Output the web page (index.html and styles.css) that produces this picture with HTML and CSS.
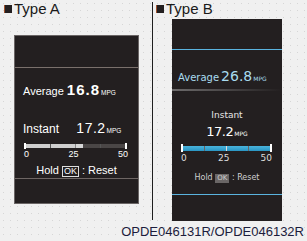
FILE: index.html
```html
<!DOCTYPE html>
<html lang="en">
<head>
    <meta charset="UTF-8">
    <title>Trip Computer - Fuel Economy</title>
    <link rel="stylesheet" href="styles.css">
</head>
<body>
    <div class="figure">
        <div class="col col-a">
            <div class="type-title"><span class="sq"></span>Type A</div>
            <div class="panel-a">
                <div class="top-a"></div>
                <div class="avg-a">Average <b>16.8</b><span class="unit">MPG</span></div>
                <div class="inst-a">Instant <span class="num">17.2</span><span class="unit">MPG</span></div>
                <div class="bar bar-a">
                    <span class="seg on"></span><span class="seg on"></span><span class="seg half"></span><span class="seg"></span>
                </div>
                <div class="scale scale-a"><span>0</span><span>25</span><span>50</span></div>
                <div class="hold-a">Hold <span class="ok">OK</span> : Reset</div>
                <div class="line-a"></div>
            </div>
        </div>
        <div class="divider"></div>
        <div class="col col-b">
            <div class="type-title"><span class="sq"></span>Type B</div>
            <div class="panel-b">
                <div class="top-b"></div>
                <div class="avg-b">Average<span class="num">26.8</span><span class="unit">MPG</span></div>
                <div class="glow"></div>
                <div class="inst-b">Instant</div>
                <div class="inst-b-num">17.2<span class="unit">MPG</span></div>
                <div class="bar bar-b">
                    <span class="seg"></span><span class="seg"></span><span class="seg mid"></span><span class="seg"></span>
                </div>
                <div class="scale scale-b"><span>0</span><span>25</span><span>50</span></div>
                <div class="hold-b">Hold <span class="ok">OK</span> : Reset</div>
                <div class="line-b"></div>
            </div>
        </div>
    </div>
    <div class="caption">OPDE046131R/OPDE046132R</div>
</body>
</html>
```

FILE: styles.css
```css
body {
    margin: 0;
    width: 307px;
    height: 241px;
    overflow: hidden;
    font-family: "Liberation Sans", Arial, sans-serif;
    background-color: #f0f0f0;
    background-image: radial-gradient(#d6d6d6 0.7px, transparent 1px);
    background-size: 7px 7px;
}
.figure {
    display: grid;
    grid-template-columns: 152px 1px 154px;
    height: 221px;
}
.divider {
    margin-top: 2px;
    height: 218px;
    background-color: #1e1e1e;
}
.type-title {
    display: flex;
    align-items: center;
    margin-top: 2px;
    font-size: 15px;
    line-height: 14px;
    color: #1a1a1a;
}
.sq {
    width: 8px;
    height: 8px;
    margin-right: 2px;
    background-color: #231f20;
    border-left: 1px solid #a0522d;
    box-sizing: border-box;
}
.col-a .type-title { padding-left: 4px; }
.col-b .type-title { padding-left: 3px; }

/* Type A */
.panel-a {
    box-sizing: border-box;
    width: 125px;
    height: 169px;
    margin: 19px 0 0 14px;
    background-color: #231f20;
    border: 1px solid #6a6565;
    color: #fff;
}
.top-a {
    height: 31px;
    border-bottom: 1px solid #7a706c;
}
.avg-a {
    margin-top: 13px;
    padding-left: 8px;
    font-size: 11px;
    line-height: 18px;
}
.avg-a b {
    font-size: 15px;
    letter-spacing: 1px;
}
.unit {
    font-size: 6.5px;
    margin-left: 1px;
}
.inst-a {
    margin-top: 18px;
    padding-left: 8px;
    font-size: 12px;
    line-height: 16px;
}
.inst-a .num {
    margin-left: 14px;
    font-size: 14px;
    letter-spacing: 0.5px;
}
.bar {
    display: flex;
    position: relative;
    border-left: 2px solid #fff;
    border-right: 2px solid #fff;
    box-sizing: border-box;
}
.seg {
    flex: 1;
    border-left: 1px solid #555;
}
.seg:first-child { border-left: none; }
.bar-a {
    width: 103px;
    height: 6px;
    margin: 4px 0 0 9px;
    padding: 1px 0;
}
.bar-a .seg { background-color: #4a4646; }
.bar-a .seg.on { background-color: #cfcfcf; }
.bar-a .seg.half { background: linear-gradient(90deg, #d6d6d6 28%, #4a4646 28%); border-left-color: #888; }
.scale {
    display: flex;
    justify-content: space-between;
    font-size: 9px;
    line-height: 10px;
}
.scale-a {
    width: 104px;
    margin-left: 9px;
    color: #fff;
}
.hold-a {
    margin-top: 5px;
    text-align: center;
    font-size: 11px;
    line-height: 13px;
}
.hold-a .ok {
    display: inline-block;
    padding: 0 1px;
    font-size: 9px;
    line-height: 9px;
    border: 1px solid #ddd;
}
.line-a {
    margin-top: 1px;
    height: 1px;
    background-color: #6e6664;
}

/* Type B */
.panel-b {
    width: 110px;
    height: 202px;
    margin: 3px 0 0 19px;
    background-color: #231f20;
    color: #fff;
    font-family: "DejaVu Sans", sans-serif;
}
.top-b {
    height: 30px;
    border-bottom: 1px solid #5ab3df;
}
.avg-b {
    margin-top: 18px;
    padding-left: 6px;
    font-size: 10px;
    line-height: 16px;
    color: #a9dcef;
}
.avg-b .num {
    margin-left: 2px;
    font-size: 14px;
}
.avg-b .unit { font-size: 6px; }
.glow {
    margin-top: 2px;
    height: 2px;
    background: linear-gradient(90deg, rgba(170, 170, 170, 0.55), rgba(120, 120, 120, 0.25) 70%, transparent);
}
.inst-b {
    margin-top: 19px;
    text-align: center;
    font-size: 9px;
    line-height: 11px;
    color: #e6e6e6;
}
.inst-b-num {
    margin-top: 3px;
    text-align: center;
    font-size: 13px;
    line-height: 15px;
    letter-spacing: -0.5px;
}
.inst-b-num .unit {
    font-size: 6px;
    letter-spacing: 0;
}
.bar-b {
    width: 91px;
    height: 8px;
    margin: 3px 0 0 9px;
    padding: 2px 0 1px;
}
.bar-b .seg {
    background: linear-gradient(#49b3dc, #2a95c3);
    border-left-color: #666;
}
.bar-b .seg.mid { border-left: 1px solid #ddd; }
.scale-b {
    width: 91px;
    margin: 1px 0 0 9px;
    color: #ddd;
}
.hold-b {
    margin-top: 10px;
    text-align: center;
    font-size: 8px;
    line-height: 10px;
    color: #cfcfcf;
}
.hold-b .ok {
    display: inline-block;
    padding: 0 2px;
    font-size: 7px;
    line-height: 9px;
    background-color: #6a6666;
    color: #ccc;
}
.line-b {
    margin-top: 11px;
    height: 1px;
    background-color: #5ab3df;
}

.caption {
    margin-top: 4px;
    padding-right: 3px;
    text-align: right;
    font-size: 13px;
    line-height: 14px;
    color: #1c1c3c;
}
```
